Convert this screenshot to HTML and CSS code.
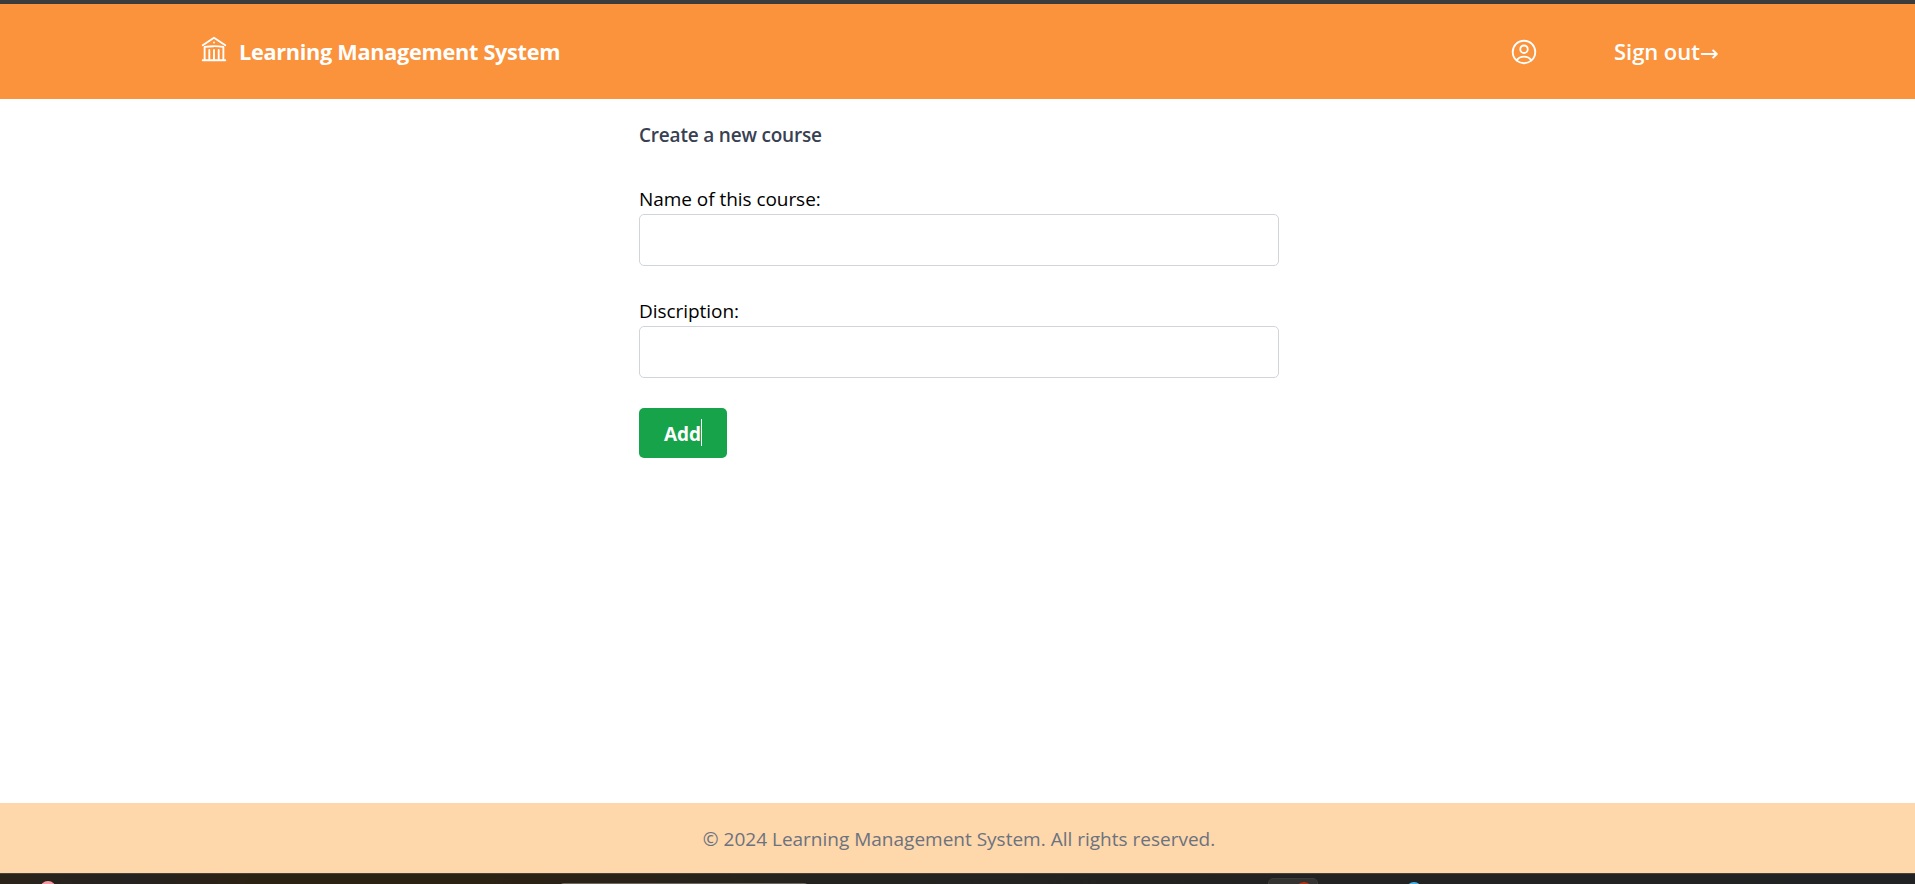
FILE: index.html
```html
<!DOCTYPE html>
<html lang="en">
<head>
<meta charset="utf-8">
<title>Learning Management System</title>
<link rel="stylesheet" href="styles.css">
</head>
<body>
<div class="page">
  <div class="top-edge"></div>
  <header class="header">
    <a class="brand">
      <svg class="icon icon-library" viewBox="0 0 24 24"><path d="M12 21v-8.25M15.75 21v-8.25M8.25 21v-8.25M3 9l9-6 9 6m-1.5 12V10.332A48.36 48.36 0 0 0 12 9.75c-2.551 0-5.056.2-7.5.582V21M3 21h18M12 6.75h.008v.008H12V6.75Z"/></svg>
      <span class="brand-name">Learning Management System</span>
    </a>
    <nav class="nav">
      <svg class="icon" viewBox="0 0 24 24"><path d="M17.982 18.725A7.488 7.488 0 0 0 12 15.75a7.488 7.488 0 0 0-5.982 2.975m11.963 0a9 9 0 1 0-11.963 0m11.963 0A8.966 8.966 0 0 1 12 21a8.966 8.966 0 0 1-5.982-2.275M15 9.75a3 3 0 1 1-6 0 3 3 0 0 1 6 0Z"/></svg>
      <a class="sign-out"><span>Sign out</span><span class="arrow">→</span></a>
    </nav>
  </header>
  <main class="main">
    <form class="form">
      <h1 class="title">Create a new course</h1>
      <div class="field">
        <label class="label" for="name">Name of this course:</label>
        <input class="input" id="name" type="text">
      </div>
      <div class="field">
        <label class="label" for="desc">Discription:</label>
        <input class="input" id="desc" type="text">
      </div>
      <button class="add" type="button"><span class="add-text">Add</span><span class="caret"></span></button>
    </form>
  </main>
  <footer class="footer"><span class="copyright">© 2024 Learning Management System. All rights reserved.</span></footer>
  <div class="taskbar">
    <span class="dot dot-pink"></span>
    <span class="search"></span>
    <span class="app"><span class="dot dot-red"></span></span>
    <span class="dot dot-blue"></span>
  </div>
</div>
</body>
</html>
```
FILE: styles.css
```css
* { box-sizing: border-box; }
body {
  margin: 0;
  background: #fff;
  font-family: "Open Sans", "Noto Sans", sans-serif;
  font-size: 19px;
  line-height: 30px;
  color: #000;
}
.page { display: flex; flex-direction: column; height: 884px; overflow: hidden; }
.top-edge { height: 4px; background: #3c3c3c; }
.header {
  height: 95px;
  padding: 0 193px 0 199px;
  display: flex;
  justify-content: space-between;
  align-items: center;
  background: #fb923c;
  color: #fff;
}
.brand, .nav { display: flex; align-items: center; }
.icon {
  width: 30px;
  height: 30px;
  fill: none;
  stroke: #fff;
  stroke-width: 1.5;
  stroke-linecap: round;
  stroke-linejoin: round;
}
.icon-library { margin-bottom: 5px; }
.brand-name { margin-left: 10px; font-size: 21.7px; font-weight: 700; letter-spacing: -0.3px; white-space: nowrap; }
.sign-out { display: flex; width: 108px; margin-left: 75px; font-size: 22px; font-weight: 600; white-space: nowrap; letter-spacing: -0.05px; padding-top: 1px; }
.arrow { padding-top: 2px; font-family: "DejaVu Sans", sans-serif; font-size: 22.5px; font-weight: 400; }
.main { flex: 1; display: flex; justify-content: center; padding-left: 3px; }
.form { width: 640px; padding-top: 21px; }
.title { margin: 0 0 34px; font-size: 19px; line-height: 30px; font-weight: 600; letter-spacing: -0.2px; color: #374151; }
.field { margin-bottom: 30px; }
.label { display: block; height: 30px; line-height: 31px; letter-spacing: -0.05px; white-space: nowrap; }
.input { display: block; width: 640px; height: 52px; border: 1px solid #d1d5db; border-radius: 5px; background: #fff; font: inherit; padding: 0 10px; }
.add {
  width: 88px;
  height: 50px;
  padding: 0 0 0 25px;
  display: flex;
  align-items: center;
  border: 0;
  border-radius: 5px;
  background: #16a34a;
  color: #fff;
  font: 700 19px/30px "Open Sans", sans-serif;
  letter-spacing: -0.1px;
}
.add-text { width: 37px; padding-top: 2px; }
.caret { width: 1px; height: 27px; margin-bottom: 1px; background: #fff; }
.footer { height: 70px; padding: 1px 0 0 3px; display: flex; align-items: center; justify-content: center; background: #fed7aa; color: #6b7280; }
.taskbar {
  position: relative;
  height: 11px;
  overflow: hidden;
  border-top: 1px solid #4b4339;
  background: linear-gradient(90deg, #29231a 0, #262221 130px, #2c2214 250px, #2c2214 480px, #242320 850px, #222 1300px, #212223 100%);
}
.dot { position: absolute; width: 16px; height: 16px; border-radius: 50%; }
.dot-pink { left: 40px; top: 7px; background: #f89aa4; }
.dot-blue { left: 1406px; top: 8px; background: #45b4e8; }
.search { position: absolute; left: 560px; top: 9px; width: 248px; height: 20px; border-radius: 4px 4px 0 0; border-top: 1px solid #6c6963; }
.app { position: absolute; left: 1268px; top: 4px; width: 50px; height: 40px; border-radius: 5px; border: 1px solid #3d3c3a; background: #343331; }
.dot-red { left: 27px; top: 3px; background: #ae3415; }
```
